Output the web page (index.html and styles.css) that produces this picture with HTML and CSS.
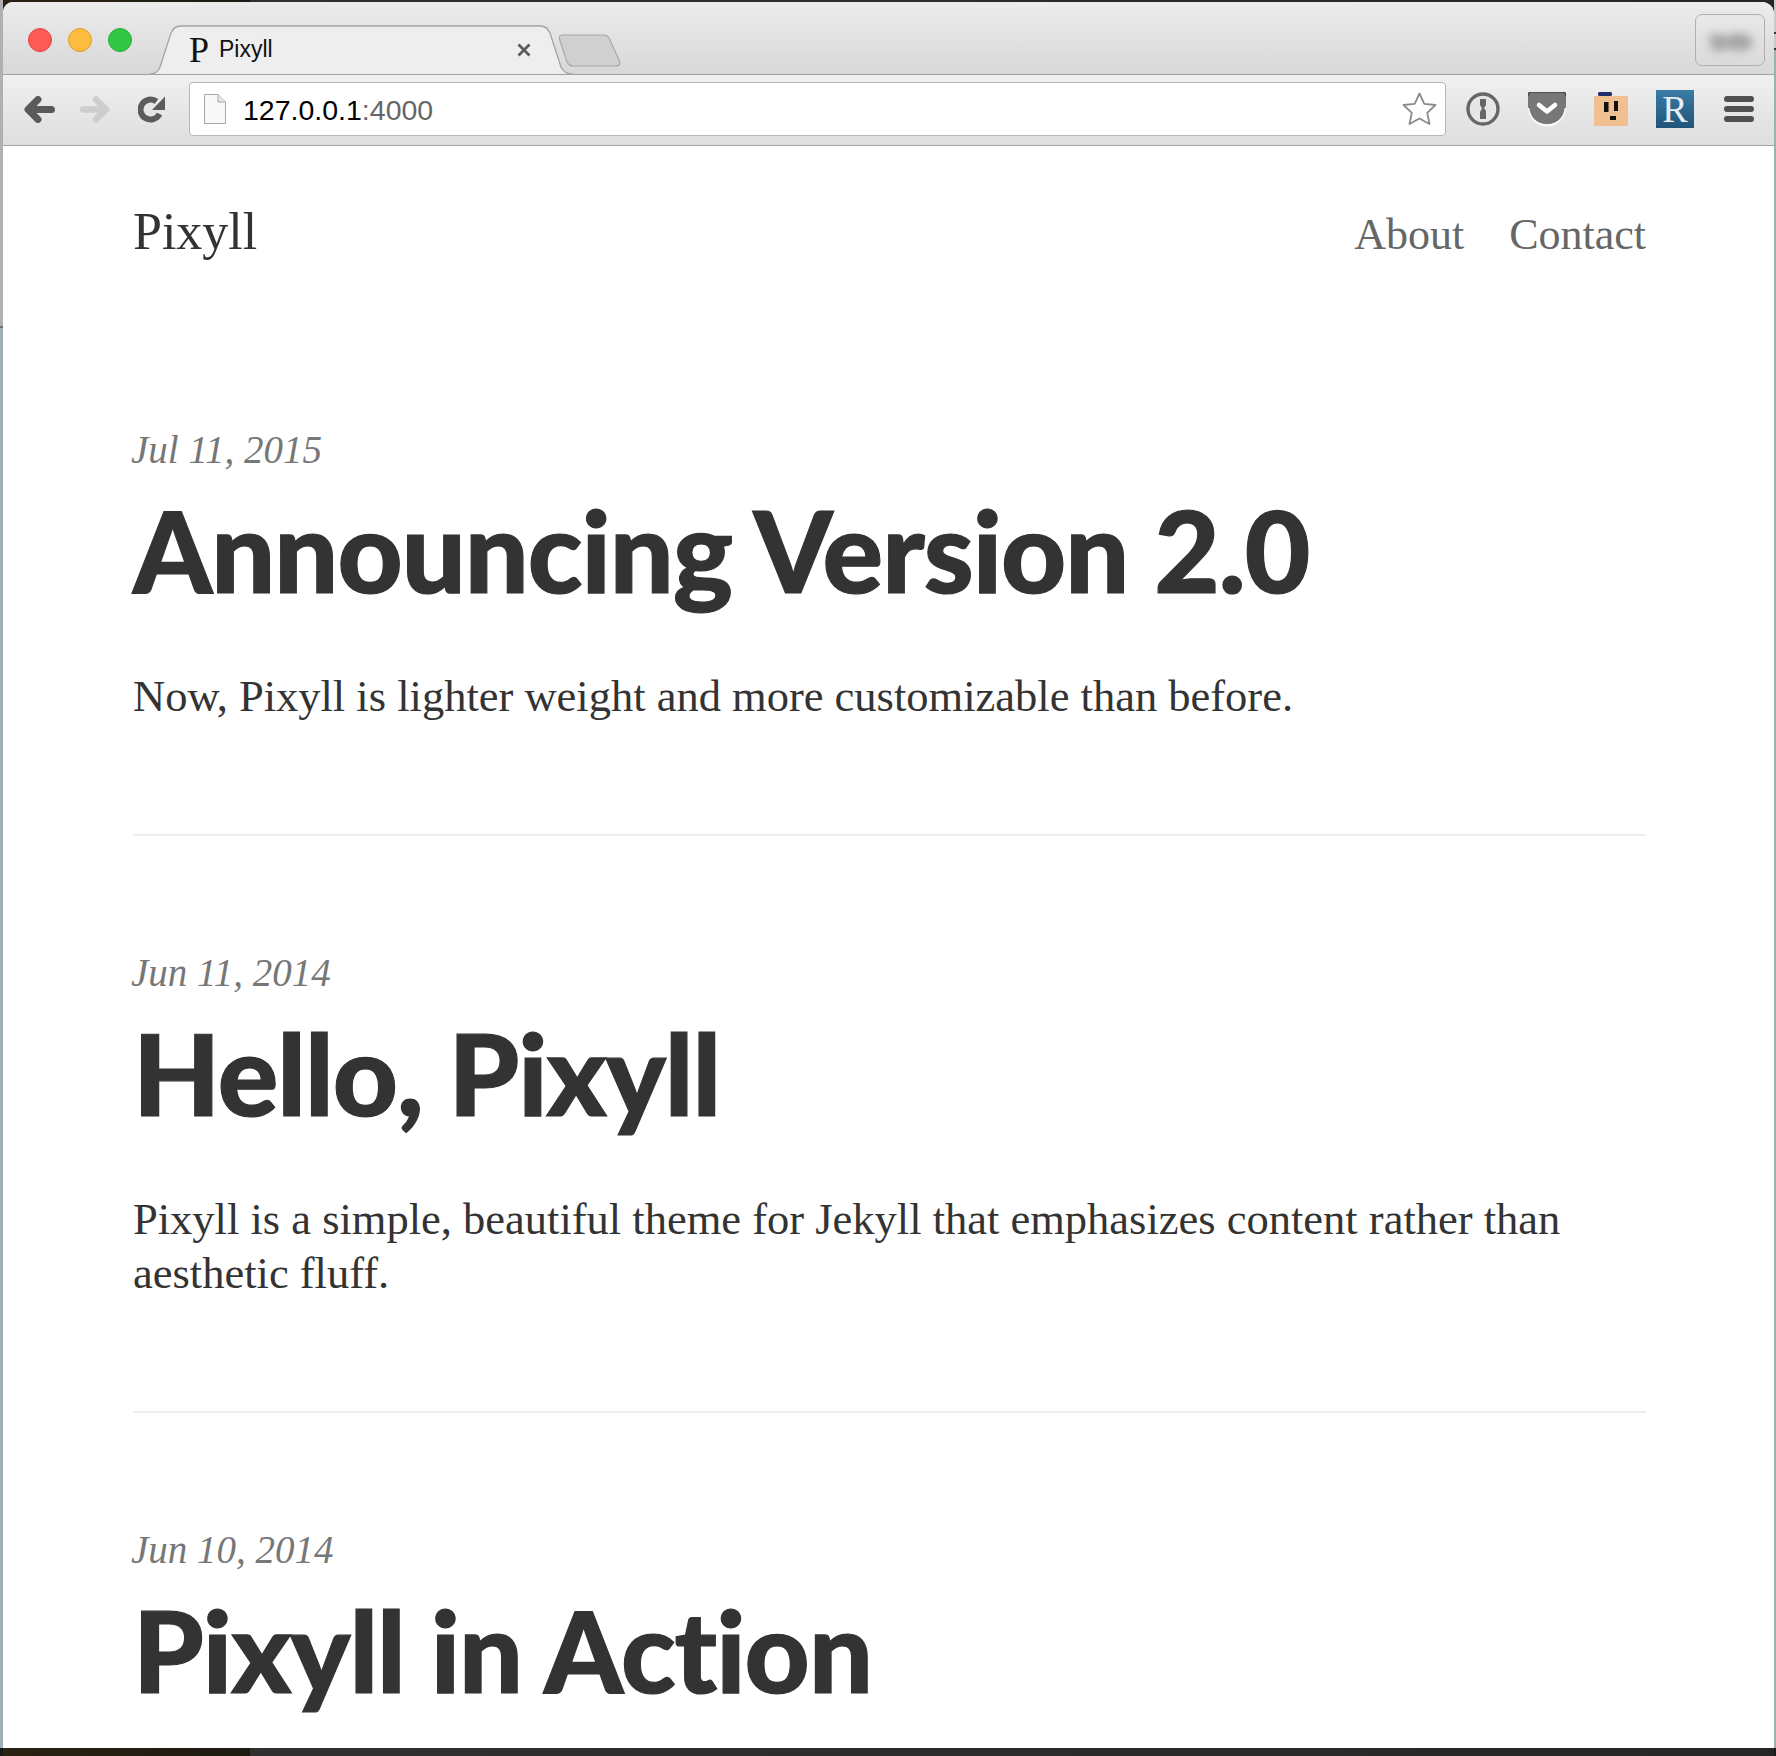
FILE: index.html
```html
<!DOCTYPE html>
<html lang="en">
<head>
<meta charset="utf-8">
<title>Pixyll</title>
<link rel="stylesheet" href="styles.css">
</head>
<body>
<div class="window">
  <div class="tabstrip">
    <div class="lights">
      <span class="light light-red"></span>
      <span class="light light-yellow"></span>
      <span class="light light-green"></span>
    </div>
    <div class="tab">
      <svg class="tab-shape" width="423" height="50" viewBox="0 0 423 50">
        <path d="M0 49 C4 49 8 47 10 42 L21 8 C23 3 26 1 31 1 L390 1 C395 1 398 3 400 8 L411 42 C413 47 417 49 423 49" fill="#eeeeee" stroke="#a4a4a4" stroke-width="1.3"/>
      </svg>
      <span class="tab-favicon">P</span>
      <span class="tab-title">Pixyll</span>
      <svg class="tab-close" width="14" height="14" viewBox="0 0 14 14"><path d="M1.5 1.5 L12.5 12.5 M12.5 1.5 L1.5 12.5" stroke="#5c5c5c" stroke-width="2.8"/></svg>
    </div>
    <svg class="newtab" width="63" height="33" viewBox="0 0 63 33"><path d="M1.500 5 C1 2 2 1 5 1 L45 1 C49 1 50 2 52 6 L61.500 27 C62.500 31 61 32 57 32 L16 32 C12 32 11 31 9 28 Z" fill="#d0d0d0" stroke="#a8a8a8" stroke-width="1.200"/></svg>
    <div class="avatar"><span class="avatar-blur"></span></div>
  </div>
  <div class="toolbar">
    <svg class="icon-back" width="31" height="27" viewBox="0 0 31 27"><path d="M27.500 13.500 L5 13.500 M14 3.500 L4 13.500 L14 23.500" fill="none" stroke="#5a5a5a" stroke-width="7" stroke-linecap="round" stroke-linejoin="round"/></svg>
    <svg class="icon-forward" width="30" height="27" viewBox="0 0 30 27"><path d="M3 13.500 L25 13.500 M16 3.500 L26 13.500 L16 23.500" fill="none" stroke="#cdcdcd" stroke-width="6.500" stroke-linecap="round" stroke-linejoin="round"/></svg>
    <svg class="icon-reload" width="27" height="27" viewBox="0 0 27 27"><path d="M21.500 18 A10 10 0 1 1 18.500 5.500" fill="none" stroke="#5c5c5c" stroke-width="6"/><path d="M27 0.500 V14 H14 Z" fill="#5c5c5c"/></svg>
    <div class="omnibox">
      <svg class="doc" width="22" height="30" viewBox="0 0 22 30"><path d="M.5 .5 H14 L21.500 8 V29.500 H.5 Z" fill="#f8f8f8" stroke="#a8a8a8"/><path d="M14 .5 V8 H21.500" fill="#e2e2e2" stroke="#a8a8a8"/></svg>
      <span class="url"><span class="url-host">127.0.0.1</span><span class="url-port">:4000</span></span>
      <svg class="star" width="35" height="34" viewBox="0 0 35 34"><path d="M17.500 1.500 L22.300 11.800 L33.500 13 L25.200 20.800 L27.500 32 L17.500 26.500 L7.500 32 L9.800 20.800 L1.500 13 L12.700 11.800 Z" fill="#fff" stroke="#8a8a8a" stroke-width="1.800" stroke-linejoin="round"/></svg>
    </div>
    <div class="extensions">
      <svg width="34" height="34" viewBox="0 0 34 34"><circle cx="17" cy="17" r="15" fill="#e6e6e6" stroke="#666" stroke-width="3.400"/><path d="M14 7 H20 V13 L18 16 L20 19 V27 H14 V20 L16 16.500 L14 13 Z" fill="#666"/></svg>
      <svg width="38" height="35" viewBox="0 0 38 35"><path d="M0 4 Q0 0 4 0 H34 Q38 0 38 4 V14 C38 25 29 32 19 32 C9 32 0 25 0 14 Z" fill="#777"/><path d="M0 4 Q0 0 4 0 H34 Q38 0 38 4" fill="none" stroke="#444" stroke-width="1.500"/><path d="M.5 16 C2 27 10 33.500 19 33.500 C28 33.500 36 27 37.500 16" fill="none" stroke="#fff" stroke-width="1.500"/><path d="M11 13 L19 19.500 L27 13" fill="none" stroke="#fff" stroke-width="4.500" stroke-linecap="round" stroke-linejoin="round"/></svg>
      <svg width="34" height="34" viewBox="0 0 34 34"><rect x="0" y="4" width="34" height="30" fill="#f0bf92"/><rect x="4" y="0" width="14" height="4" rx="1.500" fill="#1f2f6e"/><rect x="10" y="10" width="4.500" height="10" fill="#111"/><rect x="20" y="9" width="4" height="10" fill="#111"/><rect x="16" y="24" width="6" height="4" fill="#111"/></svg>
      <div class="ext-r"><span>R</span></div>
      <svg class="icon-menu" width="30" height="26" viewBox="0 0 30 26"><rect y="0" width="30" height="6" rx="3" fill="#505050"/><rect y="10" width="30" height="6" rx="3" fill="#505050"/><rect y="20" width="30" height="6" rx="3" fill="#505050"/></svg>
    </div>
  </div>
  <div class="page">
    <header class="site-header">
      <a class="site-title">Pixyll</a>
      <nav class="site-nav"><a>About</a><a>Contact</a></nav>
    </header>
    <article class="post">
      <p class="post-date">Jul 11, 2015</p>
      <h2 class="post-title">Announcing Version 2.0</h2>
      <p class="post-summary">Now, Pixyll is lighter weight and more customizable than before.</p>
    </article>
    <article class="post">
      <p class="post-date">Jun 11, 2014</p>
      <h2 class="post-title">Hello, Pixyll</h2>
      <p class="post-summary">Pixyll is a simple, beautiful theme for Jekyll that emphasizes content rather than aesthetic fluff.</p>
    </article>
    <article class="post post-last">
      <p class="post-date">Jun 10, 2014</p>
      <h2 class="post-title">Pixyll in Action</h2>
    </article>
  </div>
</div>
</body>
</html>
```

FILE: styles.css
```css
* { box-sizing: border-box; }
html, body { margin: 0; padding: 0; }
body {
  width: 1776px;
  height: 1756px;
  overflow: hidden;
  padding: 2px 2px 8px 3px;
  background:
    linear-gradient(#b0b0b0 0 326px, #6f6f6f 326px 328px, #9fb0b5 328px 1748px, #1b1a18 1748px) 0 0 / 3px 100% no-repeat,
    linear-gradient(#c9c9c9 0 32px, #333 32px 34px, #c9c9c9 34px 48px, #333 48px 50px, #9fb0b5 50px 1748px, #1b1a18 1748px) 100% 0 / 2px 100% no-repeat,
    linear-gradient(90deg, #2a2212 0, #1d1a12 250px, #303030 250px, #262626 1776px);
}
.window {
  height: 100%;
  display: flex;
  flex-direction: column;
  background: #fff;
  border-radius: 10px 12px 0 0;
  overflow: hidden;
}
.tabstrip {
  height: 73px;
  flex: none;
  display: flex;
  align-items: flex-start;
  background: linear-gradient(#ececec, #d8d8d8);
  border-bottom: 1px solid #a3a3a3;
  padding-left: 25px;
}
.lights { display: flex; gap: 16px; margin-top: 26px; width: 122px; flex: none; }
.light { width: 24px; height: 24px; border-radius: 50%; }
.light-red { background: #fc5b57; border: 1px solid #e2463f; }
.light-yellow { background: #fdbc40; border: 1px solid #e09e2d; }
.light-green { background: #33c748; border: 1px solid #2aac3a; }
.tab {
  position: relative;
  width: 423px;
  height: 73px;
  flex: none;
  display: flex;
  align-items: center;
  padding: 22px 0 0 39px;
}
.tab-shape { position: absolute; left: 0; top: 23px; }
.tab-favicon {
  position: relative;
  font: 36px/1 "Liberation Serif", serif;
  color: #111;
  width: 30px;
}
.tab-title {
  position: relative;
  font: 23px/1 "Liberation Sans", sans-serif;
  color: #111;
  flex: 1;
}
.tab-close { position: relative; margin-right: 42px; }
.newtab { flex: none; margin: 32px 0 0 -15px; }
.avatar {
  margin-left: auto;
  margin-top: 12px;
  margin-right: 9px;
  width: 70px;
  height: 52px;
  border: 1px solid #b0b0b0;
  border-radius: 7px;
  display: flex;
  align-items: center;
  justify-content: center;
}
.avatar-blur {
  width: 28px;
  height: 18px;
  margin: 4px 0 0 18px;
  background: #a6a6a6;
  border-radius: 50%;
  box-shadow: -21px -3px 0 -4px #a6a6a6, -20px 5px 0 -5px #a6a6a6;
  filter: blur(4px);
}
.toolbar {
  height: 71px;
  flex: none;
  display: flex;
  align-items: center;
  background: linear-gradient(#f0f0f0, #dedede);
  border-bottom: 1px solid #a3a3a3;
  padding: 0 0 2px 21px;
}
.icon-back { flex: none; margin-right: 25px; }
.icon-forward { flex: none; margin-right: 28px; }
.icon-reload { flex: none; margin-right: 24px; }
.omnibox {
  width: 1257px;
  height: 54px;
  flex: none;
  display: flex;
  align-items: center;
  background: #fff;
  border: 1px solid #b6b6b6;
  border-radius: 4px;
  padding: 0 8px 0 14px;
}
.doc { flex: none; }
.url { font: 28.5px/1 "Liberation Sans", sans-serif; margin: 2px 0 0 17px; flex: 1; }
.url-host { color: #000; }
.url-port { color: #666; }
.extensions {
  flex: 1;
  display: flex;
  align-items: center;
  gap: 28px;
  padding-left: 20px;
}
.ext-r {
  width: 38px;
  height: 38px;
  background: linear-gradient(#3a7ca5, #215478);
  display: flex;
  align-items: center;
  justify-content: center;
}
.ext-r span { font: 38px/1 "Liberation Serif", serif; color: #e6eef3; }
.icon-menu { margin-left: 2px; }
.page {
  flex: 1;
  overflow: hidden;
  padding: 0 128px 0 130px;
  color: #333;
}
.site-header {
  display: flex;
  justify-content: space-between;
  align-items: flex-end;
  height: 116px;
  margin-bottom: 163px;
}
.site-title { font: 52px/60px "Liberation Serif", serif; color: #333; }
.site-nav {
  display: flex;
  gap: 45px;
  font: 44px/60px "Liberation Serif", serif;
  color: #666;
  margin-bottom: -3px;
}
.post { border-bottom: 2px solid #eee; padding-bottom: 111px; margin-bottom: 112px; }
.post-last { border: 0; }
.post-date { margin: 0 0 0 -2px; font: italic 39px/50px "Liberation Serif", serif; color: #777; }
.post-title {
  margin: 9px 0 0;
  font: 900 113px/130px Lato, sans-serif;
  color: #333;
  letter-spacing: -1px;
  -webkit-text-stroke: 1.2px #333;
}
.post-summary { margin: 55px 0 0; font: 44.5px/54px "Liberation Serif", serif; color: #333; }
```
